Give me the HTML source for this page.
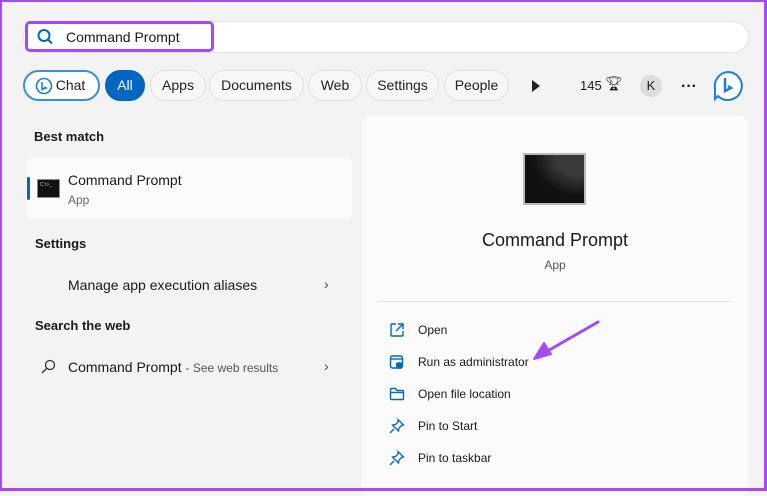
<!DOCTYPE html>
<html><head><meta charset="utf-8"><style>
*{margin:0;padding:0;box-sizing:border-box}
body{width:767px;height:491px;overflow:hidden;font-family:"Liberation Sans",sans-serif;color:#1a1a1a;background:#f3f3f3;position:relative}
.frame{position:absolute;left:0;top:0;width:767px;height:491px;border:2px solid #a64bf4;border-width:2px 3px 3px 2px;pointer-events:none;z-index:9}
.a{position:absolute;white-space:nowrap}
.chip{position:absolute;top:70px;height:31px;border:1px solid #e0e0e0;border-radius:16px;background:#f7f7f7;font-size:14px;line-height:29px;text-align:center;color:#222}
.h{font-size:13px;font-weight:bold;color:#1a1a1a}
.act{position:absolute;left:418px;font-size:12px;color:#1a1a1a}
.chev{position:absolute;left:324px;font-size:14px;color:#444}
</style></head><body>
<div class="frame"></div>
<div class="a" style="left:23px;top:21px;width:726px;height:32px;background:#fff;border:1px solid #e3e3e3;border-radius:16px"></div>
<div class="a" style="left:25px;top:21px;width:189px;height:31px;border:3px solid #a64bf4;border-radius:5px;background:#fff"></div>
<svg class="a" style="left:36px;top:28px" width="18" height="18" viewBox="0 0 18 18"><circle cx="8" cy="7.5" r="5.5" fill="none" stroke="#0067c0" stroke-width="2"/><path d="M12 11.5l4 4" stroke="#0067c0" stroke-width="2"/></svg>
<div class="a" style="left:66px;top:29px;font-size:14px">Command Prompt</div>

<div class="chip" style="left:23px;width:77px;border:2px solid #3a8ee0;background:#fff;line-height:27px;padding-left:18px">Chat</div>
<svg class="a" style="left:35px;top:77px" width="18" height="18" viewBox="0 0 18 18"><circle cx="9" cy="9" r="7.5" fill="none" stroke="#1f7ed8" stroke-width="1.6"/><path d="M7 5v7.5l4-1.5-2-1" fill="none" stroke="#1f7ed8" stroke-width="1.6"/></svg>
<div class="chip" style="left:105px;width:40px;background:#0067c0;border-color:#0067c0;color:#fff">All</div>
<div class="chip" style="left:150px;width:56px">Apps</div>
<div class="chip" style="left:209px;width:95px">Documents</div>
<div class="chip" style="left:308px;width:54px">Web</div>
<div class="chip" style="left:366px;width:73px">Settings</div>
<div class="chip" style="left:444px;width:65px">People</div>
<svg class="a" style="left:531px;top:80px" width="10" height="12"><path d="M1 0l8 6-8 6z" fill="#222"/></svg>
<div class="a" style="left:580px;top:78px;font-size:13px">145</div>
<div class="a" style="left:605px;top:75px;font-size:14px">🏆&#xFE0E;</div>
<div class="a" style="left:640px;top:75px;width:22px;height:22px;border-radius:11px;background:#ddd;font-size:13px;text-align:center;line-height:22px">K</div>
<div class="a" style="left:681px;top:78px;font-size:16px;font-weight:bold">···</div>
<svg class="a" style="left:712px;top:70px" width="32" height="32" viewBox="0 0 32 32"><path d="M16 2a14 14 0 1 1-10 24l-3 3v-11a14 14 0 0 1 13-16z" fill="#fff" stroke="#1f7ed8" stroke-width="2"/><path d="M13 8v13l6-3-3-2" fill="none" stroke="#1f7ed8" stroke-width="2.5"/></svg>

<div class="a h" style="left:34px;top:129px">Best match</div>
<div class="a" style="left:27px;top:158px;width:325px;height:61px;background:#fbfbfb;border-radius:4px"></div>
<div class="a" style="left:27px;top:177px;width:3px;height:23px;background:#0067c0;border-radius:2px"></div>
<div class="a" style="left:37px;top:179px;width:23px;height:19px;background:#111;border:1px solid #888;border-radius:1px"><div style="font-size:5px;color:#ccc;margin:2px">C:\&gt;_</div></div>
<div class="a" style="left:68px;top:172px;font-size:14px">Command Prompt</div>
<div class="a" style="left:68px;top:193px;font-size:12px;color:#666">App</div>
<div class="a h" style="left:35px;top:236px">Settings</div>
<div class="a" style="left:68px;top:277px;font-size:14px">Manage app execution aliases</div>
<div class="chev" style="top:276px">›</div>
<div class="a h" style="left:35px;top:318px">Search the web</div>
<svg class="a" style="left:41px;top:359px" width="15" height="15" viewBox="0 0 15 15"><circle cx="9" cy="6" r="4.5" fill="none" stroke="#333" stroke-width="1.3"/><path d="M6 9L1 14" stroke="#333" stroke-width="1.3"/></svg>
<div class="a" style="left:68px;top:359px;font-size:14px">Command Prompt <span style="font-size:12px;color:#555">- See web results</span></div>
<div class="chev" style="top:358px">›</div>

<div class="a" style="left:362px;top:116px;width:386px;height:380px;background:#fbfbfb;border-radius:8px"></div>
<div class="a" style="left:523px;top:153px;width:63px;height:52px;background:#111;border:2px solid #bbb"><div style="position:absolute;left:0;top:0;width:59px;height:48px;background:radial-gradient(ellipse at 90% 0%,#3a3a3a 30%,transparent 60%)"></div></div>
<div class="a" style="left:362px;top:230px;width:386px;text-align:center;font-size:18px">Command Prompt</div>
<div class="a" style="left:362px;top:258px;width:386px;text-align:center;font-size:12px;color:#555">App</div>
<div class="a" style="left:378px;top:301px;width:354px;height:1px;background:#e0e0e0"></div>

<svg class="a" style="left:389px;top:322px" width="16" height="16" viewBox="0 0 16 16" fill="none" stroke="#0067c0" stroke-width="1.4"><path d="M7 2H3a1 1 0 0 0-1 1v10a1 1 0 0 0 1 1h10a1 1 0 0 0 1-1V9"/><path d="M9 2h5v5M14 2L7 9"/></svg>
<div class="act" style="top:323px">Open</div>
<svg class="a" style="left:389px;top:354px" width="16" height="16" viewBox="0 0 16 16"><rect x="1.5" y="2" width="12" height="12" rx="2" fill="none" stroke="#0067c0" stroke-width="1.4"/><path d="M1.5 5h12" stroke="#0067c0" stroke-width="1.4"/><path d="M10 8l4 1v3a4 4 0 0 1-4 3 4 4 0 0 1-3-3V9z" fill="#0067c0"/></svg>
<div class="act" style="top:355px">Run as administrator</div>
<svg class="a" style="left:389px;top:386px" width="16" height="16" viewBox="0 0 16 16" fill="none" stroke="#0067c0" stroke-width="1.4"><path d="M1.5 3.5a1 1 0 0 1 1-1h4l1.5 2h5.5a1 1 0 0 1 1 1v7a1 1 0 0 1-1 1h-11a1 1 0 0 1-1-1z"/><path d="M1.5 6.5h13"/></svg>
<div class="act" style="top:387px">Open file location</div>
<svg class="a" style="left:389px;top:418px" width="16" height="16" viewBox="0 0 16 16" fill="none" stroke="#0067c0" stroke-width="1.3"><path d="M9 1.5l5.5 5.5-2 .5-2.5 2.5-.5 3-6-6 3-.5 2.5-2.5z"/><path d="M5 11l-4 4"/></svg>
<div class="act" style="top:419px">Pin to Start</div>
<svg class="a" style="left:389px;top:450px" width="16" height="16" viewBox="0 0 16 16" fill="none" stroke="#0067c0" stroke-width="1.3"><path d="M9 1.5l5.5 5.5-2 .5-2.5 2.5-.5 3-6-6 3-.5 2.5-2.5z"/><path d="M5 11l-4 4"/></svg>
<div class="act" style="top:451px">Pin to taskbar</div>

<svg class="a" style="left:530px;top:318px" width="72" height="45" viewBox="0 0 72 45"><path d="M68 4L14 35" stroke="#a64bf4" stroke-width="3" stroke-linecap="round"/><path d="M4 41l10-16 7 11z" fill="#a64bf4" stroke="#a64bf4" stroke-width="2" stroke-linejoin="round"/></svg>
</body></html>
